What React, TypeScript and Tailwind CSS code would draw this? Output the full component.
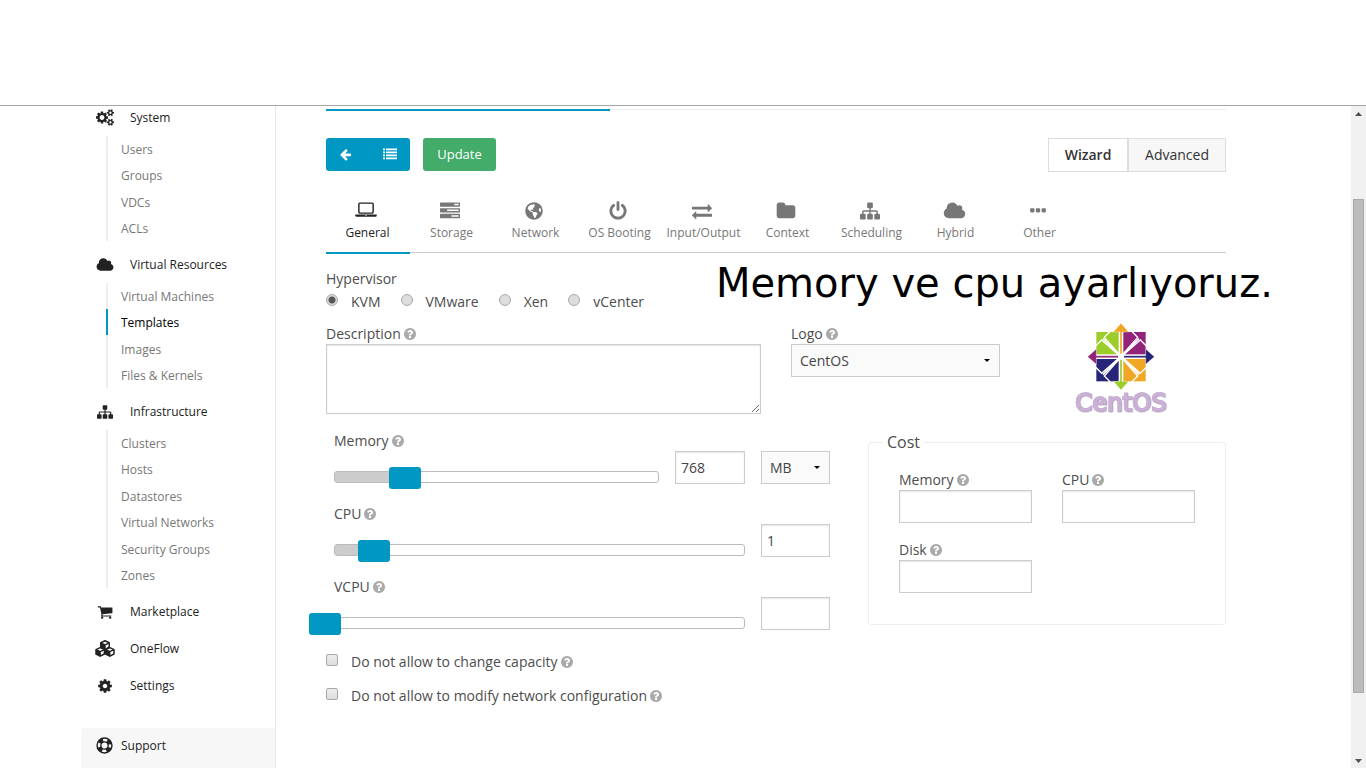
import React, { useId, useState } from "react";
import { FaGlobeAmericas } from "react-icons/fa";

const paths = {
  cog: [1792, "M1152 896q0-106-75-181t-181-75-181 75-75 181 75 181 181 75 181-75 75-181zm512-109v222q0 12-8 23t-20 13l-185 28q-19 54-39 91 35 50 107 138 10 12 10 25t-9 23q-27 37-99 108t-94 71q-12 0-26-9l-138-108q-44 23-91 38-16 136-29 186-7 28-36 28h-222q-14 0-24.5-8.5t-11.5-21.5l-28-184q-49-16-90-37l-141 107q-10 9-25 9-14 0-25-11-126-114-165-168-7-10-7-23 0-12 8-23 15-21 51-66.5t54-70.5q-27-50-41-99l-183-27q-13-2-21-12.5t-8-23.5v-222q0-12 8-23t19-13l186-28q14-46 39-92-40-57-107-138-10-12-10-24 0-10 9-23 26-36 98.5-107.5t94.5-71.5q13 0 26 10l138 107q44-23 91-38 16-136 29-186 7-28 36-28h222q14 0 24.5 8.5t11.5 21.5l28 184q49 16 90 37l142-107q9-9 24-9 13 0 25 10 129 119 165 170 7 8 7 22 0 12-8 23-15 21-51 66.5t-54 70.5q26 50 41 98l183 28q13 2 21 12.5t8 23.5z"],
  cogs: [1920, "M896 896q0-106-75-181t-181-75-181 75-75 181 75 181 181 75 181-75 75-181zm768 512q0-52-38-90t-90-38-90 38-38 90q0 53 37.5 90.5t90.5 37.5 90.5-37.5 37.5-90.5zm0-1024q0-52-38-90t-90-38-90 38-38 90q0 53 37.5 90.5t90.5 37.5 90.5-37.5 37.5-90.5zm-384 421v185q0 10-7 19.5t-16 10.5l-155 24q-11 35-32 76 34 48 90 115 7 11 7 20 0 12-7 19-23 30-82.5 89.5t-78.5 59.5q-11 0-21-7l-115-90q-37 19-77 31-11 108-23 155-7 24-30 24h-186q-11 0-20-7.5t-10-17.5l-23-153q-34-10-75-31l-118 89q-7 7-20 7-11 0-21-8-144-133-144-160 0-9 7-19 10-14 41-53t47-61q-23-44-35-82l-152-24q-10-1-17-9.5t-7-19.5v-185q0-10 7-19.5t16-10.5l155-24q11-35 32-76-34-48-90-115-7-11-7-20 0-12 7-20 22-30 82-89t79-59q11 0 21 7l115 90q34-18 77-32 11-108 23-154 7-24 30-24h186q11 0 20 7.5t10 17.5l23 153q34 10 75 31l118-89q8-7 20-7 11 0 21 8 144 133 144 160 0 8-7 19-12 16-42 54t-45 60q23 48 34 82l152 23q10 2 17 10.5t7 19.5zm640 533v140q0 16-149 31-12 27-30 52 51 113 51 138 0 4-4 7-122 71-124 71-8 0-46-47t-52-68q-20 2-30 2t-30-2q-14 21-52 68t-46 47q-2 0-124-71-4-3-4-7 0-25 51-138-18-25-30-52-149-15-149-31v-140q0-16 149-31 13-29 30-52-51-113-51-138 0-4 4-7 4-2 35-20t59-34 30-16q8 0 46 46.5t52 67.5q20-2 30-2t30 2q51-71 92-112l6-2q4 0 124 70 4 3 4 7 0 25-51 138 17 23 30 52 149 15 149 31zm0-1024v140q0 16-149 31-12 27-30 52 51 113 51 138 0 4-4 7-122 71-124 71-8 0-46-47t-52-68q-20 2-30 2t-30-2q-14 21-52 68t-46 47q-2 0-124-71-4-3-4-7 0-25 51-138-18-25-30-52-149-15-149-31v-140q0-16 149-31 13-29 30-52-51-113-51-138 0-4 4-7 4-2 35-20t59-34 30-16q8 0 46 46.5t52 67.5q20-2 30-2t30 2q51-71 92-112l6-2q4 0 124 70 4 3 4 7 0 25-51 138 17 23 30 52 149 15 149 31z"],
  cloud: [2048, "M1984 1152q0 159-112.5 271.5t-271.5 112.5h-1088q-185 0-316.5-131.5t-131.5-316.5q0-132 71-241.5t187-163.5q-2-28-2-43 0-212 150-362t362-150q158 0 286.5 88t187.5 230q70-62 166-62 106 0 181 75t75 181q0 75-41 138 129 30 213 134.5t84 239.5z"],
  sitemap: [1792, "M1792 1248v320q0 40-28 68t-68 28h-320q-40 0-68-28t-28-68v-320q0-40 28-68t68-28h96v-192h-512v192h96q40 0 68 28t28 68v320q0 40-28 68t-68 28h-320q-40 0-68-28t-28-68v-320q0-40 28-68t68-28h96v-192h-512v192h96q40 0 68 28t28 68v320q0 40-28 68t-68 28h-320q-40 0-68-28t-28-68v-320q0-40 28-68t68-28h96v-192q0-52 38-90t90-38h512v-192h-96q-40 0-68-28t-28-68v-320q0-40 28-68t68-28h320q40 0 68 28t28 68v320q0 40-28 68t-68 28h-96v192h512q52 0 90 38t38 90v192h96q40 0 68 28t28 68z"],
  cart: [1792, "M704 1536q0 52-38 90t-90 38-90-38-38-90 38-90 90-38 90 38 38 90zm896 0q0 52-38 90t-90 38-90-38-38-90 38-90 90-38 90 38 38 90zm128-1088v512q0 24-16.5 42.5t-40.5 21.5l-1044 122q13 60 13 70 0 16-24 64h920q26 0 45 19t19 45-19 45-45 19h-1024q-26 0-45-19t-19-45q0-11 8-31.5t16-36 21.5-40 15.5-29.5l-177-823h-204q-26 0-45-19t-19-45 19-45 45-19h256q16 0 28.5 6.5t19.5 15.5 13 24.5 8 26 5.5 29.5 4.5 26h1201q26 0 45 19t19 45z"],
  arrow: [1792, "M1664 896v128q0 53-32.5 90.5t-84.5 37.5h-704l293 294q38 36 38 90t-38 90l-75 76q-37 37-90 37-52 0-91-37l-651-652q-37-37-37-90 0-52 37-91l651-650q38-38 91-38 52 0 90 38l75 74q38 38 38 91t-38 91l-293 293h704q52 0 84.5 37.5t32.5 90.5z"],
  list: [1792, "M0 192h256v224H0zM384 192h1408v224H384zM0 576h256v224H0zM384 576h1408v224H384zM0 960h256v224H0zM384 960h1408v224H384zM0 1344h256v224H0zM384 1344h1408v224H384z"],
  laptop: [1920, "M416 1152q-66 0-113-47t-47-113v-704q0-66 47-113t113-47h1088q66 0 113 47t47 113v704q0 66-47 113t-113 47h-1088zm-32-864v704q0 13 9.5 22.5t22.5 9.5h1088q13 0 22.5-9.5t9.5-22.5v-704q0-13-9.5-22.5t-22.5-9.5h-1088q-13 0-22.5 9.5t-9.5 22.5zm1376 928h160v96q0 40-47 68t-113 28h-1600q-66 0-113-28t-47-68v-96h1760zm-720 96q16 0 16-16t-16-16h-160q-16 0-16 16t16 16h160z"],
  tasks: [1792, "M1024 1408h640v-128h-640v128zm-384-512h1024v-128h-1024v128zm640-512h384v-128h-384v128zm512 832v256q0 26-19 45t-45 19h-1664q-26 0-45-19t-19-45v-256q0-26 19-45t45-19h1664q26 0 45 19t19 45zm0-512v256q0 26-19 45t-45 19h-1664q-26 0-45-19t-19-45v-256q0-26 19-45t45-19h1664q26 0 45 19t19 45zm0-512v256q0 26-19 45t-45 19h-1664q-26 0-45-19t-19-45v-256q0-26 19-45t45-19h1664q26 0 45 19t19 45z"],
  power: [1792, "M1664 896q0 156-61 298t-164 245-245 164-298 61-298-61-245-164-164-245-61-298q0-182 80.5-343t226.5-270q43-32 95.5-25t83.5 50q32 42 24.5 94.5t-49.5 84.5q-98 74-151.5 181t-53.5 228q0 104 40.5 198.5t109.5 163.5 163.5 109.5 198.5 40.5 198.5-40.5 163.5-109.5 109.5-163.5 40.5-198.5q0-121-53.5-228t-151.5-181q-42-32-49.5-84.5t24.5-94.5q31-43 84-50t95 25q146 109 226.5 270t80.5 343zm-640-768v640q0 52-38 90t-90 38-90-38-38-90v-640q0-52 38-90t90-38 90 38 38 90z"],
  exchange: [1792, "M1792 1184v192q0 13-9.5 22.5t-22.5 9.5h-1376v192q0 13-9.5 22.5t-22.5 9.5q-12 0-24-10l-319-320q-9-9-9-22 0-14 9-23l320-320q9-9 23-9 13 0 22.5 9.5t9.5 22.5v192h1376q13 0 22.5 9.5t9.5 22.5zm0-544q0 14-9 23l-320 320q-9 9-23 9-13 0-22.5-9.5t-9.5-22.5v-192h-1376q-13 0-22.5-9.5t-9.5-22.5v-192q0-13 9.5-22.5t22.5-9.5h1376v-192q0-14 9-23t23-9q12 0 24 10l319 319q9 9 9 23z"],
  folder: [1792, "M1728 608v704q0 92-66 158t-158 66h-1216q-92 0-158-66t-66-158v-960q0-92 66-158t158-66h320q92 0 158 66t66 158v32h672q92 0 158 66t66 158z"],
  ellipsis: [1792, "M576 736v192q0 40-28 68t-68 28h-192q-40 0-68-28t-28-68v-192q0-40 28-68t68-28h192q40 0 68 28t28 68zm512 0v192q0 40-28 68t-68 28h-192q-40 0-68-28t-28-68v-192q0-40 28-68t68-28h192q40 0 68 28t28 68zm512 0v192q0 40-28 68t-68 28h-192q-40 0-68-28t-28-68v-192q0-40 28-68t68-28h192q40 0 68 28t28 68z"],
  help: [1792, "M1024 1376v-192q0-14-9-23t-23-9h-192q-14 0-23 9t-9 23v192q0 14 9 23t23 9h192q14 0 23-9t9-23zm256-672q0-88-55.5-163t-138.5-116-170-41q-243 0-371 213-15 24 8 42l132 100q7 6 19 6 16 0 25-12 53-68 86-92 34-24 86-24 48 0 85.5 26t37.5 59q0 38-20 61t-68 45q-63 28-115.5 86.5t-52.5 125.5v36q0 14 9 23t23 9h192q14 0 23-9t9-23q0-19 21.5-49.5t54.5-49.5q32-18 49-28.5t46-35 44.5-48 28-60.5 12.5-81zm384 192q0 209-103 385.5t-279.5 279.5-385.5 103-385.5-103-279.5-279.5-103-385.5 103-385.5 279.5-279.5 385.5-103 385.5 103 279.5 279.5 103 385.5z"],
} as const;

type IconName = keyof typeof paths;

function Icon({ name, className }: { name: IconName; className: string }) {
  const [width, d] = paths[name];
  return (
    <svg viewBox={`0 0 ${width} 1792`} className={className} fill="currentColor" fillRule="evenodd" aria-hidden="true">
      <path d={d} />
    </svg>
  );
}

function Cubes() {
  const cube = (x: number, y: number) => (
    <g transform={`translate(${x} ${y})`} strokeLinejoin="round">
      <path d="M0-4.200 4.200-2.200V2.200L0 4.400-4.200 2.200V-2.200z" fill="#fff" stroke="currentColor" strokeWidth="1.5" />
      <path d="M-4.200-2.200 0-.2V4.400L-4.200 2.200z" fill="currentColor" />
      <path d="M-4.200-2.200 0-.2 4.200-2.200M0-.2V4.400" fill="none" stroke="currentColor" strokeWidth="1.3" />
    </g>
  );
  return (
    <svg viewBox="0 0 20 17" className="h-[17px] w-5" aria-hidden="true">
      {cube(10, 5)}
      {cube(5.2, 11.8)}
      {cube(14.8, 11.8)}
    </svg>
  );
}

function LifeRing() {
  return (
    <svg viewBox="0 0 18 18" className="size-[17px]" fill="none" stroke="currentColor" aria-hidden="true">
      <circle cx="9" cy="9" r="7.9" strokeWidth="1.5" />
      <circle cx="9" cy="9" r="3.9" strokeWidth="1.4" />
      <circle cx="9" cy="9" r="5.9" strokeWidth="4.6" strokeDasharray="4.8 4.467" strokeDashoffset="-2.23" />
    </svg>
  );
}

function Help() {
  return <Icon name="help" className="size-[14px] shrink-0 text-[#aaa]" />;
}

function SideHeader({ icon, text }: { icon: React.ReactNode; text: string }) {
  return (
    <a href="#" className="flex h-[37px] items-center text-[12px] text-[#222]">
      <span className="flex w-[47px] justify-center">{icon}</span>
      <span className="pl-[2px]">{text}</span>
    </a>
  );
}

function SideList({ items, active }: { items: string[]; active?: string }) {
  return (
    <ul className="mb-[5px] ml-[25px] text-[12px] text-[#777]">
      {items.map((t, i) => (
        <li
          key={t}
          className={`flex items-center border-l-2 pt-[2px] pl-[13px] ${i > 0 && i % 2 === 0 ? "h-[27px]" : "h-[26px]"} ${
            t === active ? "border-[#0098c3] text-black" : "border-[#eee]"
          }`}
        >
          <a href="#">{t}</a>
        </li>
      ))}
    </ul>
  );
}

const labelRow = "flex h-5 items-center gap-[2px] pb-[2px] [&>svg]:mt-[2px]";

const field =
  "h-[33px] w-full border border-[#ccc] bg-white px-[5px] text-[14px] text-[#444] shadow-[inset_0_1px_2px_rgba(0,0,0,0.1)] outline-none";

function Select({ options, label, id }: { options: string[]; label?: string; id?: string }) {
  return (
    <div className="relative">
      <select
        id={id}
        aria-label={label}
        className="h-[33px] w-full appearance-none border border-[#ccc] bg-[#fafafa] pl-2 text-[14px] text-[#444] outline-none"
      >
        {options.map((o) => (
          <option key={o}>{o}</option>
        ))}
      </select>
      <svg viewBox="0 0 6 3" className="pointer-events-none absolute top-[15px] right-[10px] h-[3px] w-[6px]" aria-hidden="true">
        <path d="M0 0h6L3 3z" />
      </svg>
    </div>
  );
}

function Slider({ label, start }: { label: string; start: number }) {
  const [value, setValue] = useState(start);
  return (
    <div className="relative h-3 flex-1 rounded-[3px] border border-[#bbb] bg-white">
      <div className="h-full bg-[#ccc]" style={{ width: `${value / 10}%` }} />
      <input
        type="range"
        min={0}
        max={1000}
        value={value}
        onChange={(e) => setValue(Number(e.target.value))}
        aria-label={label}
        className="absolute -top-[5px] -left-[26px] h-[22px] w-[calc(100%+27px)] appearance-none bg-transparent [&::-webkit-slider-thumb]:h-[22px] [&::-webkit-slider-thumb]:w-8 [&::-webkit-slider-thumb]:appearance-none [&::-webkit-slider-thumb]:rounded-[3px] [&::-webkit-slider-thumb]:bg-[#0098c3]"
      />
    </div>
  );
}

function CapacityRow({ label, start, value, units }: { label: string; start: number; value: string; units?: string[] }) {
  const id = useId();
  return (
    <div className="h-[73px]">
      <label htmlFor={id} className={labelRow}>
        {label} <Help />
      </label>
      <div className="flex items-start gap-4">
        <div className="flex flex-1 pt-5">
          <Slider label={`${label} slider`} start={start} />
        </div>
        <div className={units ? "w-[70px]" : "w-[69px]"}>
          <input id={id} type="text" defaultValue={value} className={field} />
        </div>
        {units && (
          <div className="w-[69px]">
            <Select label="Memory unit" options={units} />
          </div>
        )}
      </div>
    </div>
  );
}

function CostField({ label }: { label: string }) {
  const id = useId();
  return (
    <div>
      <label htmlFor={id} className={labelRow}>
        {label} <Help />
      </label>
      <input id={id} type="text" className={field} />
    </div>
  );
}

function CheckRow({ label }: { label: string }) {
  return (
    <label className="flex h-[34px] items-center pb-px">
      <input
        type="checkbox"
        className="mr-[13px] mb-[3px] size-3 appearance-none rounded-[2px] border border-[#a8a8a8] bg-linear-to-b from-[#eee] to-[#ddd] checked:bg-[#0098c3]"
      />
      <span className="mr-[2px]">{label}</span>
      <Help />
    </label>
  );
}

function CentosLogo() {
  const square = (angle: number, fill: string) => (
    <g transform={`rotate(${angle} 100 100)`}>
      <path d="M26 26h67v67H26z" fill={fill} />
      <path d="M24 68 42 50 94 96M68 24 50 42 96 94" fill="none" stroke="#fff" strokeWidth="4" />
      <path d="M46 46 100 100" stroke="#fff" strokeWidth="5" />
    </g>
  );
  const pointer = (angle: number, fill: string) => (
    <path transform={`rotate(${angle} 100 100)`} d="M97 92V26H77L100 0l23 26h-20v66z" fill={fill} stroke="#fff" strokeWidth="1" />
  );
  return (
    <svg viewBox="0 0 288 288" className="-mb-1 size-24" role="img" aria-label="CentOS">
      <g transform="translate(44 4)">
        {square(0, "#9ccd2a")}
        {square(90, "#932279")}
        {square(180, "#efa724")}
        {square(270, "#262577")}
        {pointer(0, "#efa724")}
        {pointer(90, "#262577")}
        {pointer(180, "#9ccd2a")}
        {pointer(270, "#932279")}
        <circle cx="100" cy="100" r="9" fill="#fff" />
      </g>
      <text
        x="144"
        y="267"
        textAnchor="middle"
        fontFamily="DejaVu Sans"
        fontSize="73"
        fill="#cbb0d6"
        stroke="#cbb0d6"
        strokeWidth="5"
        className="drop-shadow-[1px_1px_1px_#85749a]"
      >
        CentOS
      </text>
    </svg>
  );
}

const tabs: [string, React.ReactNode][] = [
  ["General", <Icon name="laptop" className="h-5 w-[22px]" />],
  ["Storage", <Icon name="tasks" className="size-5" />],
  ["Network", <FaGlobeAmericas className="mb-px size-[18px]" />],
  ["OS Booting", <Icon name="power" className="size-5" />],
  ["Input/Output", <Icon name="exchange" className="size-5" />],
  ["Context", <Icon name="folder" className="size-5" />],
  ["Scheduling", <Icon name="sitemap" className="size-5" />],
  ["Hybrid", <Icon name="cloud" className="h-5 w-[23px]" />],
  ["Other", <Icon name="ellipsis" className="size-5" />],
];

export default function App() {
  return (
    <div className="relative flex h-screen flex-col overflow-hidden bg-white font-['Open_Sans','Noto_Sans',sans-serif] text-[14px] text-[#4d4d4d]">
      <header className="h-[106px] shrink-0 border-b border-[#a6a6a6]" />
      <div className="flex min-h-0 flex-1">
        <div className="mx-auto flex min-h-0 max-w-[1189px] flex-1">
          <nav className="flex w-[195px] shrink-0 flex-col border-r border-[#e8e8e8]">
            <div className="-mt-[7px]">
              <SideHeader icon={<Icon name="cogs" className="h-[17px] w-[18px]" />} text="System" />
            </div>
            <SideList items={["Users", "Groups", "VDCs", "ACLs"]} />
            <SideHeader icon={<Icon name="cloud" className="h-4 w-[18px]" />} text="Virtual Resources" />
            <SideList items={["Virtual Machines", "Templates", "Images", "Files & Kernels"]} active="Templates" />
            <SideHeader icon={<Icon name="sitemap" className="size-4" />} text="Infrastructure" />
            <SideList items={["Clusters", "Hosts", "Datastores", "Virtual Networks", "Security Groups", "Zones"]} />
            <SideHeader icon={<Icon name="cart" className="size-4" />} text="Marketplace" />
            <SideHeader icon={<Cubes />} text="OneFlow" />
            <SideHeader icon={<Icon name="cog" className="size-4" />} text="Settings" />
            <a href="#" className="mt-6 flex flex-1 items-start rounded-t-[3px] bg-[#f7f7f7] pt-[9px] text-[12px] text-[#222]">
              <span className="flex w-10 justify-center pl-[7px]">
                <LifeRing />
              </span>
              <span>Support</span>
            </a>
          </nav>

          <main className="min-w-0 flex-1 pt-[3px] pr-[44px] pl-[50px]">
            <div className="flex h-[2px] items-start">
              <div className="h-[2px] w-[284px] bg-[#0098c3]" />
              <div className="h-px flex-1 bg-[#eee]" />
            </div>

            <div className="mt-[27px] flex h-[34px] items-start">
              <div className="flex h-[33px] w-[84px] rounded-[3px] bg-[#0098c3] text-white">
                <button type="button" aria-label="Back" className="flex w-[38px] items-center justify-center">
                  <Icon name="arrow" className="size-[13px]" />
                </button>
                <button type="button" aria-label="List" className="flex flex-1 items-center justify-center pb-[2px] pl-[6px]">
                  <Icon name="list" className="size-[14px]" />
                </button>
              </div>
              <button type="button" className="ml-[13px] h-[33px] w-[73px] rounded-[3px] bg-[#43ac6a] text-[13px] text-white">
                Update
              </button>
              <div className="ml-auto flex h-[34px] text-[14px] text-[#333]">
                <button type="button" className="w-[80px] border border-[#ddd] pb-[2px] font-semibold">
                  Wizard
                </button>
                <button type="button" className="w-[98px] border border-[#ddd] bg-[#f7f7f7] pb-[2px]">
                  Advanced
                </button>
              </div>
            </div>

            <div role="tablist" className="mt-5 flex h-[61px] border-b border-[#ccc] text-[12px] text-[#777]">
              {tabs.map(([t, icon], i) => (
                <button
                  key={t}
                  type="button"
                  role="tab"
                  aria-selected={i === 0}
                  className={`flex h-[62px] w-[84px] flex-col items-center pt-[9px] whitespace-nowrap ${
                    i === 0 ? "border-b-2 border-[#0098c3] text-[#222]" : ""
                  }`}
                >
                  <span className="flex h-5 items-center pr-1">{icon}</span>
                  <span className="pr-px leading-6">{t}</span>
                </button>
              ))}
            </div>

            <fieldset className="mt-4">
              <legend className="h-5 leading-5">Hypervisor</legend>
              <div className="flex h-6 items-center gap-5">
                {["KVM", "VMware", "Xen", "vCenter"].map((h, i) => (
                  <label key={h} className="flex items-center gap-[13px]">
                    <input
                      type="radio"
                      name="hypervisor"
                      defaultChecked={i === 0}
                      className="mb-[3px] size-3 appearance-none rounded-full border border-[#aaa] bg-[#ddd] checked:bg-[radial-gradient(circle,#555_3px,#ddd_4px)]"
                    />
                    {h}
                  </label>
                ))}
              </div>
            </fieldset>

            <div className="mt-[11px] flex h-[90px]">
              <div className="w-[435px]">
                <label htmlFor="description" className={labelRow}>
                  Description <Help />
                </label>
                <textarea
                  id="description"
                  className="block h-[70px] w-full border border-[#ccc] p-2 shadow-[inset_0_1px_2px_rgba(0,0,0,0.1)] outline-none"
                />
              </div>
              <div className="ml-[30px] w-[209px]">
                <label htmlFor="logo" className={labelRow}>
                  Logo <Help />
                </label>
                <Select id="logo" options={["CentOS", "Debian", "Ubuntu"]} />
              </div>
              <div className="flex flex-1 items-end justify-center pl-4">
                <CentosLogo />
              </div>
            </div>

            <div className="mt-[17px] flex items-start">
              <div className="w-[504px] pl-2">
                <CapacityRow label="Memory" start={252} value="768" units={["MB", "GB"]} />
                <CapacityRow label="CPU" start={121} value="1" />
                <CapacityRow label="VCPU" start={0} value="" />
              </div>
              <fieldset className="ml-[38px] h-[194px] flex-1 rounded-[3px] border border-[#eee] px-[30px]">
                <legend className="-ml-4 px-1 text-[16px] leading-[22px]">Cost</legend>
                <div className="mt-[17px] grid grid-cols-2 gap-x-[30px] gap-y-[17px]">
                  <CostField label="Memory" />
                  <CostField label="CPU" />
                  <CostField label="Disk" />
                </div>
              </fieldset>
            </div>

            <div className="-mt-[5px]">
              <CheckRow label="Do not allow to change capacity" />
              <CheckRow label="Do not allow to modify network configuration" />
            </div>
          </main>
        </div>

        <div className="flex w-[15px] shrink-0 flex-col items-center bg-[#f1f1f1]" aria-hidden="true">
          <svg viewBox="0 0 15 15" className="size-[15px] shrink-0" fill="#505050">
            <path d="M4 10h7L7.500 6z" />
          </svg>
          <div className="grow-[78]" />
          <div className="w-[11px] grow-[494] border border-[#a8a8a8] bg-[#bcbcbc]" />
          <div className="grow-[60]" />
          <svg viewBox="0 0 15 15" className="size-[15px] shrink-0" fill="#505050">
            <path d="M4 6h7l-3.500 4z" />
          </svg>
        </div>
      </div>

      <p className="absolute top-[258px] left-[716px] font-['DejaVu_Sans',sans-serif] text-[40px] leading-[50px] whitespace-nowrap text-black">
        Memory ve cpu ayarlıyoruz.
      </p>
    </div>
  );
}
